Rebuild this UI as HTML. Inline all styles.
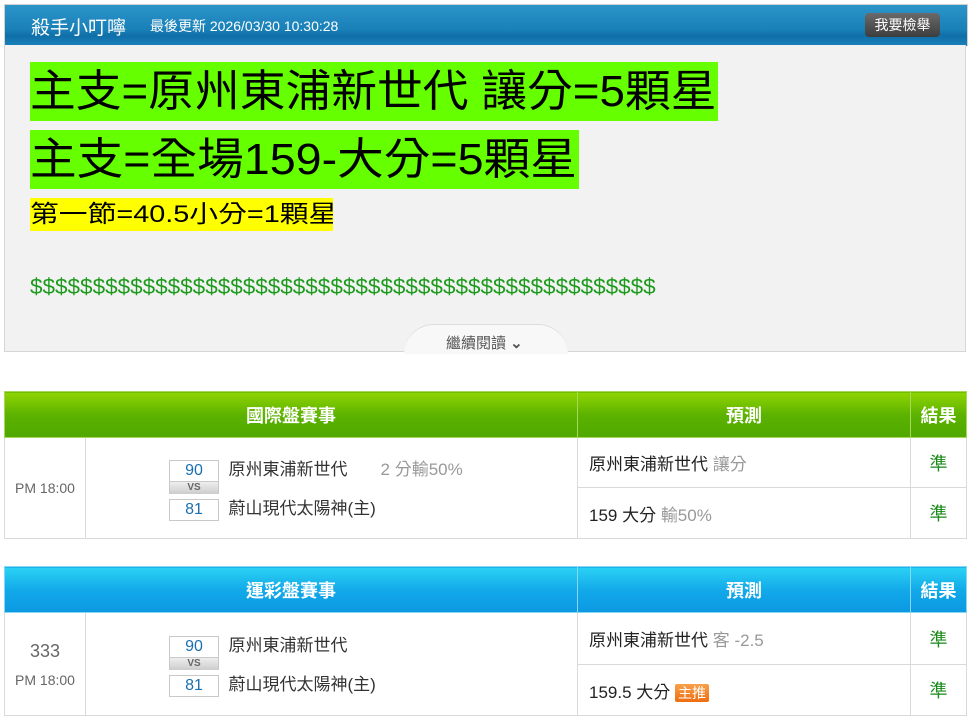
<!DOCTYPE html>
<html><head><meta charset="utf-8"><style>
body{margin:0;width:971px;height:720px;background:#fff;font-family:"Liberation Sans","Noto Sans CJK TC",sans-serif;position:relative;overflow:hidden}
.a{position:absolute;white-space:nowrap}
.hdr{left:4px;top:4px;width:962px;height:41px;background:linear-gradient(#2b95c9,#1a80b8 60%,#0f6fa8 75%,#1a82ba);border:1px solid #d0d0d0;border-bottom:none}
.box{left:4px;top:45px;width:960px;height:306px;background:#f2f2f2;border:1px solid #d6d6d6;border-top:none}
.hl{position:absolute;color:#000;white-space:nowrap;overflow:hidden}
.hl span{display:inline-block;transform-origin:0 50%}
table{position:absolute;left:4px;width:962px;border-collapse:collapse;font-size:17px;color:#333;table-layout:fixed}
td,th{border:1px solid #d9d9d9;padding:0}
th{color:#fff;font-size:18px;font-weight:bold;height:45px}
.g th{background:linear-gradient(#8fd400,#5cb200 50%,#4fa800);border-color:#a6d95a}
.b th{background:linear-gradient(#2bd2f4,#12a9e9 50%,#0b98e2);border-color:#8ad7f2}
.t{color:#666;font-size:14px;text-align:center}
.sc{display:inline-block;width:48px;border:1px solid #c9c9c9;text-align:center;color:#1a6fb0;font-size:16px;line-height:20px;background:#fff}
.vs{display:block;width:48px;height:12px;background:linear-gradient(#eee,#ccc);font-size:10px;line-height:12px;text-align:center;color:#666;font-weight:bold;border-left:1px solid #c9c9c9;border-right:1px solid #c9c9c9}
.r{color:#1a8a1a;text-align:center;font-size:18px}
.gr{color:#999}
.p{padding-left:11px;color:#222}
</style></head><body>
<div class="a hdr"></div>
<div class="a" style="left:31px;top:13px;color:#fff;font-size:19px">殺手小叮嚀</div>
<div class="a" style="left:150px;top:16px;color:#fff;font-size:14px">最後更新 2026/03/30 10:30:28</div>
<div class="a" style="left:865px;top:13px;width:75px;height:24px;background:linear-gradient(#6a6a6a,#3d3d3d);border-radius:4px;color:#fff;font-size:14px;text-align:center;line-height:24px">我要檢舉</div>
<div class="a box"></div>
<div class="hl" style="left:30px;top:62px;width:688px;height:59px;background:#66ff00;font-size:44px;line-height:60px"><span style="transform:scaleX(1.04)">主支=原州東浦新世代 讓分=5顆星</span></div>
<div class="hl" style="left:30px;top:130px;width:549px;height:59px;background:#66ff00;font-size:44px;line-height:60px"><span style="transform:scaleX(1.06)">主支=全場159-大分=5顆星</span></div>
<div class="hl" style="left:30px;top:198px;width:303px;height:33px;background:#ffff00;font-size:24px;line-height:34px"><span style="transform:scaleX(1.2)">第一節=40.5小分=1顆星</span></div>
<div class="a" style="left:30px;top:274px;color:#1c9a1c;font-size:22.5px">$$$$$$$$$$$$$$$$$$$$$$$$$$$$$$$$$$$$$$$$$$$$$$$$$$</div>
<div class="a" style="left:404px;top:324px;width:164px;height:29px;background:#f8f8f8;border-radius:40px 40px 0 0;border-top:1px solid #ddd"></div>
<div class="a" style="left:446px;top:332px;color:#555;font-size:15px">繼續閱讀 <b>&#8964;</b></div>

<table class="g" style="top:391px">
<colgroup><col style="width:81px"><col style="width:492px"><col style="width:333px"><col style="width:56px"></colgroup>
<tr><th colspan="2">國際盤賽事</th><th>預測</th><th>結果</th></tr>
<tr style="height:50px"><td rowspan="2" class="t">PM 18:00</td><td rowspan="2" style="padding-left:83px">
<div><span class="sc">90</span> &nbsp;原州東浦新世代 &nbsp; &nbsp; &nbsp; <span class="gr">2 分輸50%</span></div><span class="vs">VS</span><div><span class="sc">81</span> &nbsp;蔚山現代太陽神(主)</div></td>
<td class="p">原州東浦新世代 <span class="gr">讓分</span></td><td class="r">準</td></tr>
<tr style="height:51px"><td class="p">159 大分 <span class="gr">輸50%</span></td><td class="r">準</td></tr>
</table>

<table class="b" style="top:566px">
<colgroup><col style="width:81px"><col style="width:492px"><col style="width:333px"><col style="width:56px"></colgroup>
<tr><th colspan="2">運彩盤賽事</th><th>預測</th><th>結果</th></tr>
<tr style="height:52px"><td rowspan="2" class="t"><div style="font-size:18px;margin-bottom:10px">333</div>PM 18:00</td><td rowspan="2" style="padding-left:83px">
<div><span class="sc">90</span> &nbsp;原州東浦新世代</div><span class="vs">VS</span><div><span class="sc">81</span> &nbsp;蔚山現代太陽神(主)</div></td>
<td class="p">原州東浦新世代 <span class="gr">客 -2.5</span></td><td class="r">準</td></tr>
<tr style="height:51px"><td class="p">159.5 大分 <span style="background:linear-gradient(#f9a04a,#ee6d10);color:#fff;font-size:14px;padding:1px 3px;border-radius:2px">主推</span></td><td class="r">準</td></tr>
</table>
</body></html>
